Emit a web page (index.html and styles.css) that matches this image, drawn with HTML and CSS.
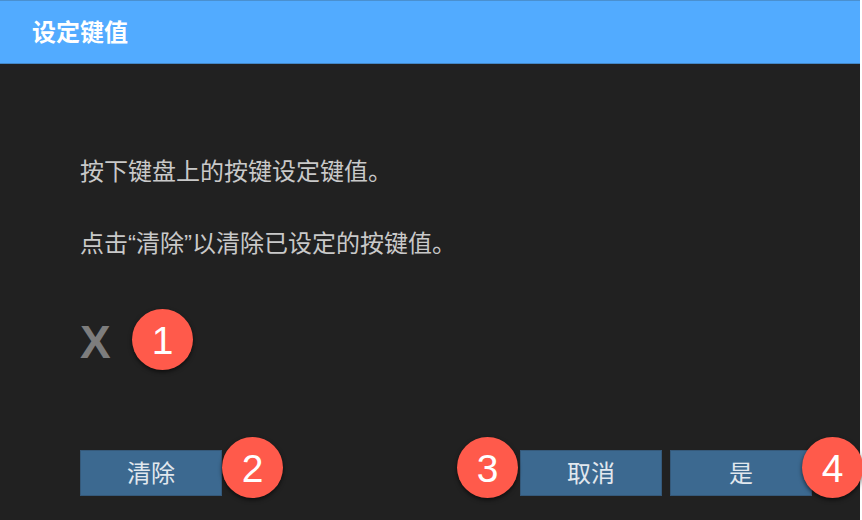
FILE: index.html
```html
<!DOCTYPE html>
<html lang="zh-CN">
<head>
  <meta charset="UTF-8">
  <meta name="viewport" content="width=device-width, initial-scale=1.0">
  <title>设定键值</title>
  <link rel="stylesheet" href="styles.css">
</head>
<body>

<div class="dialog">
  <div class="dialog-title">设定键值</div>

  <div class="dialog-body">
    <p class="message">按下键盘上的按键设定键值。</p>
    <p class="message">点击“清除”以清除已设定的按键值。</p>

    <div class="key-row">
      <span class="key-value">X</span>
      <span class="badge badge-key">1</span>
    </div>

    <div class="actions">
      <button type="button" class="btn">清除<span class="badge badge-after">2</span></button>
      <div class="actions-right">
        <button type="button" class="btn">取消<span class="badge badge-before">3</span></button>
        <button type="button" class="btn">是<span class="badge badge-after badge-last">4</span></button>
      </div>
    </div>
  </div>
</div>

</body>
</html>
```

FILE: styles.css
```css
html, body {
  margin: 0;
  height: 100%;
  background: #fff;
}
body {
  overflow: hidden;
  font-family: "Liberation Sans", "Noto Sans CJK SC", sans-serif;
}
.dialog {
  width: 860px;
  height: 520px;
  background: #212121;
}
.dialog-title {
  box-sizing: border-box;
  height: 64px;
  padding-left: 32px;
  line-height: 63px;
  font-size: 24px;
  font-weight: bold;
  color: #fff;
  background: #52abff;
  border-top: 1px solid #4a90d0;
  border-bottom: 1px solid #4387c6;
}
.dialog-body {
  padding: 92px 48px 0 80px;
}
.message {
  margin: 0 0 40px;
  font-size: 24px;
  line-height: 32px;
  color: #c9c9c9;
}
.key-row {
  display: flex;
  align-items: center;
  position: relative;
  height: 62px;
  margin-top: 49px;
}
.key-value {
  padding-top: 3px;
  font-size: 46px;
  font-weight: bold;
  color: #7d7d7d;
}
.actions {
  display: flex;
  justify-content: space-between;
  margin-top: 79px;
}
.actions-right {
  display: flex;
  gap: 8px;
}
.btn {
  position: relative;
  width: 142px;
  height: 46px;
  padding: 0 0 3px;
  font-family: inherit;
  font-size: 24px;
  color: #e2e8ee;
  background: #3c6990;
  border: 1px solid #35597a;
}
/* Numbered callouts placed over the screenshot */
.badge {
  position: absolute;
  width: 61px;
  height: 61px;
  border-radius: 50%;
  font-family: "Liberation Sans", sans-serif;
  font-size: 39px;
  font-weight: normal;
  line-height: 63px;
  text-align: center;
  color: #fff;
  background: #ff5a4b;
  box-shadow: 0 2px 4px rgba(0, 0, 0, 0.6);
}
.badge-key {
  left: 52px;
  top: 0;
}
.badge-after {
  left: 141px;
  top: -14px;
}
.badge-before {
  left: -64px;
  top: -14px;
}
.badge-last {
  left: 131px;
}
```
